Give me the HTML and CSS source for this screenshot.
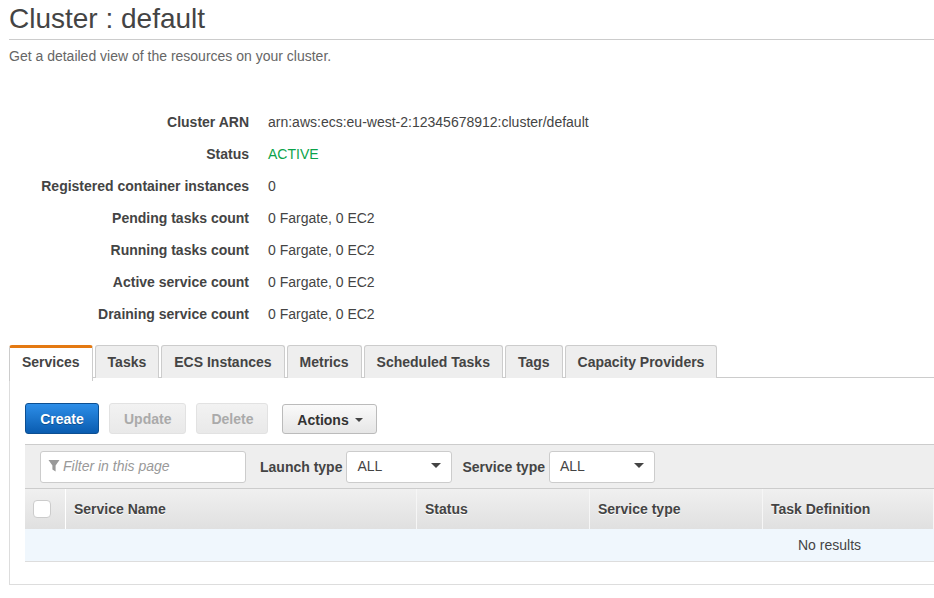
FILE: index.html
```html
<!DOCTYPE html>
<html lang="en">
<head>
  <meta charset="UTF-8">
  <title>Cluster : default</title>
  <meta name="viewport" content="width=device-width, initial-scale=1">
  <link rel="stylesheet" href="styles.css">
</head>
<body>

<h1>Cluster : default</h1>
<p class="subtitle">Get a detailed view of the resources on your cluster.</p>

<dl class="details">
  <dt>Cluster ARN</dt><dd>arn:aws:ecs:eu-west-2:12345678912:cluster/default</dd>
  <dt>Status</dt><dd class="active">ACTIVE</dd>
  <dt>Registered container instances</dt><dd>0</dd>
  <dt>Pending tasks count</dt><dd>0 Fargate, 0 EC2</dd>
  <dt>Running tasks count</dt><dd>0 Fargate, 0 EC2</dd>
  <dt>Active service count</dt><dd>0 Fargate, 0 EC2</dd>
  <dt>Draining service count</dt><dd>0 Fargate, 0 EC2</dd>
</dl>

<div class="tabs">
  <div class="tab selected">Services</div>
  <div class="tab">Tasks</div>
  <div class="tab">ECS Instances</div>
  <div class="tab">Metrics</div>
  <div class="tab">Scheduled Tasks</div>
  <div class="tab">Tags</div>
  <div class="tab">Capacity Providers</div>
</div>

<div class="panel">
  <div class="toolbar">
    <button class="btn primary">Create</button>
    <button class="btn" disabled>Update</button>
    <button class="btn" disabled>Delete</button>
    <button class="btn actions">Actions <span class="caret small"></span></button>
  </div>

  <div class="filters">
    <div class="filter-input">
      <svg class="funnel" width="12" height="13" viewBox="0 0 12 13"><path d="M0.5 1h11L7.6 6.5V12.5L4.4 10.5V6.5z" fill="#999"/></svg>
      <span>Filter in this page</span>
    </div>
    <label>Launch type</label>
    <div class="select"><span>ALL</span><span class="caret"></span></div>
    <label>Service type</label>
    <div class="select"><span>ALL</span><span class="caret"></span></div>
  </div>

  <div class="table-head">
    <div class="cell check"><span class="checkbox"></span></div>
    <div class="cell">Service Name</div>
    <div class="cell">Status</div>
    <div class="cell">Service type</div>
    <div class="cell">Task Definition</div>
  </div>
  <div class="no-results"><span>No results</span></div>
</div>

</body>
</html>
```
FILE: styles.css
```css
html, body {
  margin: 0;
  height: 598px;
  overflow: hidden;
}
body {
  font-family: "Liberation Sans", Arial, sans-serif;
  font-size: 14px;
  color: #444;
  background: #fff;
  padding-left: 9px;
}
h1 {
  margin: 0;
  height: 39px;
  line-height: 37px;
  font-size: 28px;
  font-weight: normal;
  border-bottom: 1px solid #ccc;
}
.subtitle {
  margin: 0;
  height: 32px;
  line-height: 32px;
  color: #666;
}
.details {
  display: grid;
  grid-template-columns: 240px 1fr;
  grid-auto-rows: 32px;
  column-gap: 19px;
  margin: 34px 0 15px;
  line-height: 32px;
}
.details dt {
  text-align: right;
  font-weight: bold;
}
.details dd {
  margin: 0;
}
.details .active {
  color: #0ba34a;
}
.tabs {
  display: flex;
  gap: 2px;
  height: 32px;
  border-bottom: 1px solid #ccc;
}
.tab {
  height: 32px;
  padding: 0 12px;
  line-height: 33px;
  font-weight: bold;
  background: #eee;
  border: 1px solid #ccc;
  border-bottom: none;
  border-radius: 3px 3px 0 0;
}
.tab.selected {
  height: 33px;
  background: #fff;
  border-top: 3px solid #e47911;
  line-height: 29px;
  position: relative;
  z-index: 1;
}
.panel {
  border: 1px solid #ddd;
  border-top: none;
  border-right: none;
  height: 181px;
  padding: 25px 0 0 15px;
}
.toolbar {
  display: flex;
  align-items: flex-end;
  gap: 10px;
  height: 31px;
}
.btn {
  height: 31px;
  padding: 0 14px;
  font-family: inherit;
  font-size: 14px;
  font-weight: bold;
  color: #aaa;
  background: linear-gradient(#f2f2f2, #e9e9e9);
  border: 1px solid #e2e2e2;
  border-radius: 3px;
}
.btn.primary {
  width: 74px;
  padding: 0;
  color: #fff;
  background: linear-gradient(#2d8ee8, #0a5cb0);
  border-color: #0c4f92;
  text-shadow: 0 1px 0 #0c4f92;
}
.btn.actions {
  height: 30px;
  width: 95px;
  padding: 2px 0 0;
  margin-left: 4px;
  color: #333;
  background: linear-gradient(#fafafa, #e6e6e6);
  border-color: #bbb;
}
.caret {
  display: inline-block;
  width: 0;
  height: 0;
  border-left: 5px solid transparent;
  border-right: 5px solid transparent;
  border-top: 5px solid #444;
}
.caret.small {
  border-left-width: 4px;
  border-right-width: 4px;
  border-top-width: 4px;
  margin-left: 2px;
  vertical-align: 3px;
}
.filters {
  display: flex;
  align-items: center;
  margin-top: 10px;
  height: 43px;
  padding-left: 15px;
  background: #eee;
  border-top: 1px solid #ccc;
  border-bottom: 1px solid #ccc;
}
.filter-input {
  display: flex;
  align-items: center;
  gap: 3px;
  box-sizing: border-box;
  width: 206px;
  height: 32px;
  padding: 0 0 2px 7px;
  color: #999;
  font-style: italic;
  background: #fff;
  border: 1px solid #ccc;
  border-radius: 3px;
}
.filters label {
  font-weight: bold;
  margin: 0 4px 0 14px;
}
.filters label:nth-of-type(2) {
  margin-left: 10px;
}
.select {
  display: flex;
  align-items: center;
  justify-content: space-between;
  box-sizing: border-box;
  width: 106px;
  height: 32px;
  padding: 0 10px 2px 10px;
  background: #fff;
  border: 1px solid #ccc;
  border-radius: 3px;
}
.table-head {
  display: grid;
  grid-template-columns: 41px 351px 173px 173px 171px;
  height: 40px;
}
.cell {
  padding-left: 8px;
  line-height: 40px;
  font-weight: bold;
  background: linear-gradient(#f0f0f0, #e0e0e0);
  border-right: 1px solid #f6f6f6;
  text-shadow: 0 1px 0 #fff;
}
.cell.check {
  display: flex;
  align-items: center;
  border-right-color: #fff;
}
.checkbox {
  width: 16px;
  height: 16px;
  background: #fff;
  border: 1px solid #ccc;
  border-radius: 4px;
}
.no-results {
  height: 32px;
  line-height: 32px;
  padding-left: 773px;
  background: #f0f7fd;
  border-bottom: 1px solid #ddd;
}
```
